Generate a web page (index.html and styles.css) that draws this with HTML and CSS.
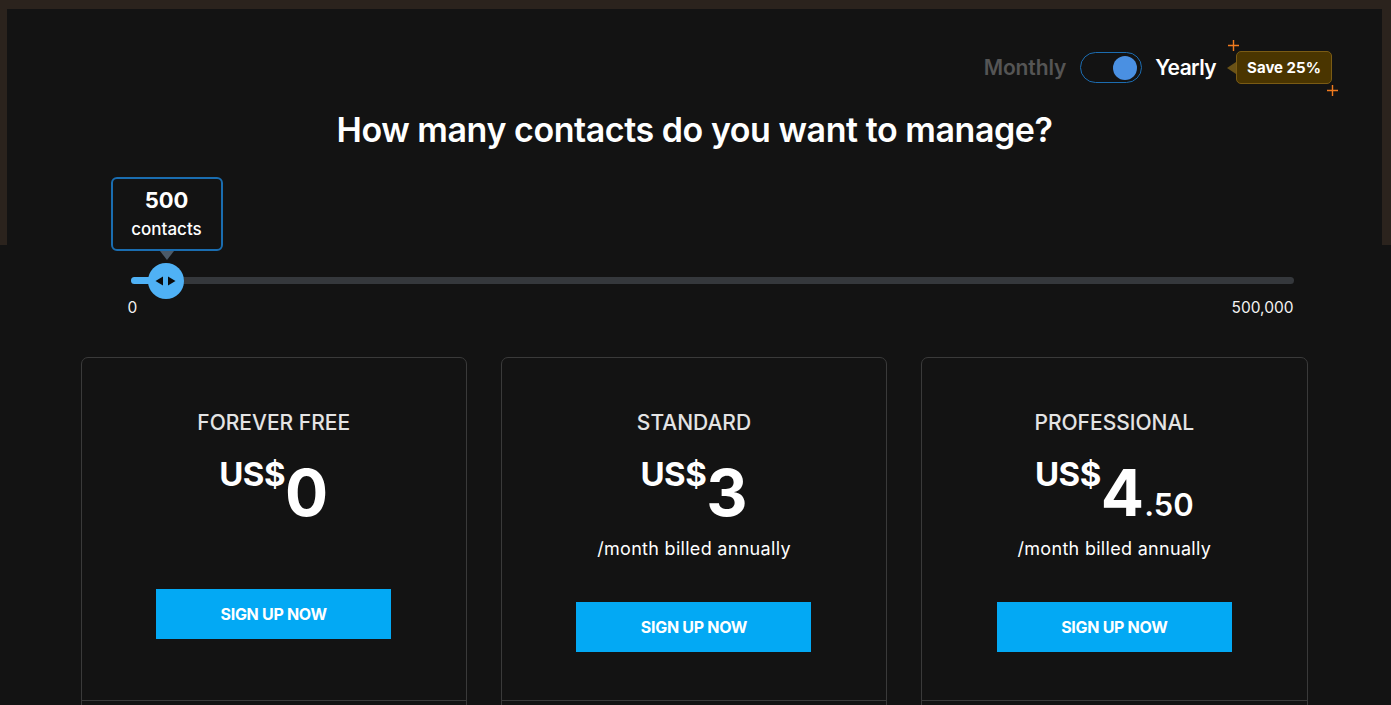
FILE: index.html
```html
<!DOCTYPE html>
<html lang="en">
<head>
<meta charset="utf-8">
<title>Pricing</title>
<link rel="stylesheet" href="styles.css">
</head>
<body>
<div class="page">
  <div class="billing">
    <span class="billing-label billing-label--off">Monthly</span>
    <span class="switch"><span class="switch-knob"></span></span>
    <span class="billing-label billing-label--on">Yearly</span>
    <span class="save">
      <span class="save-arrow"></span>
      <span class="save-badge">Save 25%
        <svg class="spark spark--top" width="11" height="11" viewBox="0 0 11 11"><path d="M5.5 0 V11 M0 5.5 H11" stroke="#f07a1e" stroke-width="1.4"/></svg>
        <svg class="spark spark--bottom" width="11" height="11" viewBox="0 0 11 11"><path d="M5.5 0 V11 M0 5.5 H11" stroke="#f07a1e" stroke-width="1.4"/></svg>
      </span>
    </span>
  </div>

  <main class="pricing">
    <h1 class="question">How many contacts do you want to manage?</h1>

    <div class="slider">
      <div class="bubble">
        <div class="bubble-box">
          <span class="bubble-num">500</span>
          <span class="bubble-unit">contacts</span>
        </div>
        <span class="bubble-arrow"></span>
      </div>
      <div class="track">
        <div class="track-fill" style="width:35px"></div>
        <div class="thumb" style="left:17px">
          <svg width="21" height="12" viewBox="0 0 21 12"><path d="M8 1.5 L0.5 6 L8 10.5 Z" fill="#0b0b0b"/><path d="M13 1.5 L20.5 6 L13 10.5 Z" fill="#0b0b0b"/></svg>
        </div>
      </div>
      <div class="track-labels"><span class="track-min">0</span><span>500,000</span></div>
    </div>

    <div class="plans">
      <section class="plan plan--free">
        <div class="plan-head">
          <h2 class="plan-name">FOREVER FREE</h2>
          <div class="price"><span class="currency">US$</span><span class="amount">0</span></div>
          <a class="cta" href="#">SIGN UP NOW</a>
        </div>
        <div class="plan-body"></div>
      </section>
      <section class="plan">
        <div class="plan-head">
          <h2 class="plan-name">STANDARD</h2>
          <div class="price"><span class="currency">US$</span><span class="amount">3</span></div>
          <p class="billed">/month billed annually</p>
          <a class="cta" href="#">SIGN UP NOW</a>
        </div>
        <div class="plan-body"></div>
      </section>
      <section class="plan">
        <div class="plan-head">
          <h2 class="plan-name">PROFESSIONAL</h2>
          <div class="price"><span class="currency">US$</span><span class="amount">4</span><span class="cents">.50</span></div>
          <p class="billed">/month billed annually</p>
          <a class="cta" href="#">SIGN UP NOW</a>
        </div>
        <div class="plan-body"></div>
      </section>
    </div>
  </main>
</div>
</body>
</html>
```

FILE: styles.css
```css
* { box-sizing: border-box; }

html, body { margin: 0; padding: 0; }

body {
  font-family: Inter, "Noto Sans", sans-serif;
  color: #fff;
  background:
    linear-gradient(#131313, #131313) 7px 9px / calc(100% - 16px) 236px no-repeat,
    linear-gradient(#2b231d, #2b231d) 0 0 / 100% 245px no-repeat,
    #131313;
  overflow: hidden;
}

.page {
  margin: 9px 9px 0 7px;
}

/* billing toggle */
.billing {
  display: flex;
  justify-content: flex-end;
  align-items: center;
  padding: 42px 50px 0 0;
  height: 75px;
}
.billing-label {
  font-size: 21px;
  font-weight: 600;
  color: #fff;
  letter-spacing: -0.1px;
}
.billing-label--on { letter-spacing: -0.6px; }
.billing-label--off { color: #555; }
.switch {
  margin: 0 13px 0 14px;
  width: 62px;
  height: 31px;
  border: 1px solid #1c6cb0;
  border-radius: 16px;
  display: flex;
  align-items: center;
  justify-content: flex-end;
  padding-right: 4px;
}
.switch-knob {
  width: 24px;
  height: 24px;
  border-radius: 50%;
  background: #4a90e2;
}
.save {
  display: flex;
  align-items: center;
  margin-left: 11px;
}
.save-arrow {
  width: 0;
  height: 0;
  border-top: 6px solid transparent;
  border-bottom: 6px solid transparent;
  border-right: 9px solid #6a5217;
}
.save-badge {
  position: relative;
  display: flex;
  align-items: center;
  justify-content: center;
  width: 96px;
  height: 33px;
  background: #4a3500;
  border: 1px solid #7a5b14;
  border-radius: 5px;
  font-size: 15px;
  font-weight: 700;
  color: #fff;
}
.spark {
  position: absolute;
  display: block;
}
.spark--top { left: -9px; top: -12px; }
.spark--bottom { right: -7px; bottom: -13px; }

/* main */
.pricing {
  width: 1224px;
  margin: 0 auto;
}

.question {
  margin: 24px 0 0;
  text-align: center;
  font-size: 34px;
  font-weight: 600;
  line-height: 44px;
  letter-spacing: -0.45px;
}

/* slider */
.slider {
  margin-top: 25px;
  padding: 0 13px 0 48px;
}
.bubble {
  width: 112px;
  margin-left: -20px;
  display: flex;
  flex-direction: column;
  align-items: center;
}
.bubble-box {
  width: 112px;
  height: 74px;
  border: 2px solid #1a6db0;
  border-radius: 6px;
  display: flex;
  flex-direction: column;
  align-items: center;
  justify-content: center;
  padding-top: 2px;
}
.bubble-num {
  font-size: 22px;
  font-weight: 700;
  line-height: 28px;
}
.bubble-unit {
  font-size: 17px;
  font-weight: 500;
  line-height: 30px;
}
.bubble-arrow {
  width: 0;
  height: 0;
  border-left: 7px solid transparent;
  border-right: 7px solid transparent;
  border-top: 9px solid #4c5a68;
}
.track {
  position: relative;
  margin-top: 17px;
  height: 7px;
  border-radius: 4px;
  background: #35383c;
}
.track-fill {
  height: 7px;
  border-radius: 4px;
  background: #4fb1f5;
}
.thumb {
  position: absolute;
  top: -14.5px;
  width: 36px;
  height: 36px;
  border-radius: 50%;
  background: #4fb1f5;
  display: flex;
  align-items: center;
  justify-content: center;
}
.track-labels {
  display: flex;
  justify-content: space-between;
  margin-top: 15px;
  font-size: 15.5px;
  line-height: 18px;
  color: #f2f2f2;
}
.track-min { margin-left: -3px; }

/* plans */
.plans {
  display: grid;
  grid-template-columns: repeat(3, 1fr);
  gap: 34px;
  margin: 40px -1px 0 -2px;
}
.plan {
  border: 1px solid #3a3a3a;
  border-radius: 7px;
}
.plan-head {
  height: 343px;
  border-bottom: 1px solid #3a3a3a;
  display: flex;
  flex-direction: column;
  align-items: center;
  padding-top: 53px;
}
.plan-name {
  margin: 0;
  font-size: 21px;
  font-weight: 500;
  line-height: 24px;
  color: #e4e4e4;
}
.price {
  margin-top: 26px;
  display: flex;
  align-items: baseline;
  line-height: 1;
}
.currency {
  align-self: flex-start;
  margin-top: -3px;
  margin-right: 0;
  font-size: 33px;
  font-weight: 700;
  letter-spacing: -0.5px;
}
.amount {
  font-size: 64px;
  font-weight: 700;
}
.cents {
  font-size: 31px;
  font-weight: 600;
}
.billed {
  margin: 12px 0 0;
  font-size: 18px;
  line-height: 23px;
  letter-spacing: 0.3px;
  color: #fff;
}
.cta {
  margin-top: 42px;
  width: 235px;
  height: 50px;
  display: flex;
  align-items: center;
  justify-content: center;
  background: #03a9f4;
  color: #fff;
  font-size: 16px;
  font-weight: 700;
  text-decoration: none;
  letter-spacing: -0.3px;
}
.plan--free .cta { margin-top: 64px; }
.plan-body { height: 300px; }
```
